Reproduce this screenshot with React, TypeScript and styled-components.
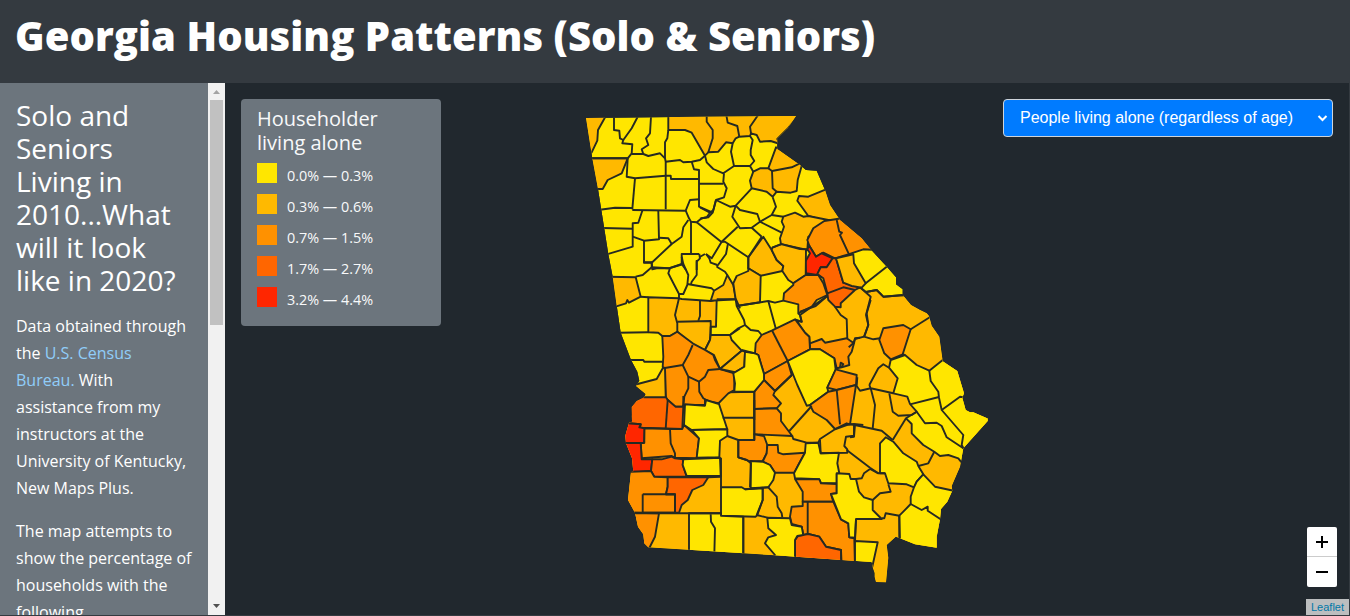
import React from "react";
import styled, { createGlobalStyle } from "styled-components";

const GlobalStyle = createGlobalStyle`
  *, *::before, *::after { box-sizing: border-box; }
  html, body, #root { height: 100%; }
  body {
    margin: 0;
    overflow: hidden;
    background: #343a40;
    color: #fff;
    font-family: "Open Sans", "Noto Sans", sans-serif;
  }
`;

const LEVELS = ["#ffe600", "#ffb900", "#ff9100", "#ff6600", "#ff2600"];
const MAP_BG = "#21282e";

const Page = styled.div`
  display: flex;
  flex-direction: column;
  height: 616px;
`;

const Header = styled.header`
  flex: 0 0 83px;
  padding: 12px 15px 0;
  background: #343a40;
`;

const Title = styled.h1`
  margin: 0;
  font-size: 40px;
  font-weight: 800;
  line-height: 48px;
  letter-spacing: 0.04px;
  white-space: nowrap;
`;

const Body = styled.div`
  display: flex;
  height: 532px;
`;

const Sidebar = styled.aside`
  width: 208px;
  padding: 16px 16px 0;
  overflow: hidden;
  background: #6c757d;
`;

const Heading = styled.h3`
  margin: 0 0 16px;
  font-size: 28px;
  font-weight: 400;
  line-height: 33px;
`;

const Paragraph = styled.p`
  margin: 0 -1px 16px 0;
  font-size: 16px;
  line-height: 27px;
`;

const Link = styled.a`
  color: #90cdf9;
  text-decoration: none;
`;

const ScrollTrack = styled.div`
  display: flex;
  flex-direction: column;
  align-items: center;
  width: 17px;
  background: #f1f1f1;
`;

const ScrollThumb = styled.div`
  width: 13px;
  height: 225px;
  margin-bottom: auto;
  background: #c1c1c1;
`;

const ScrollArrow = styled.svg`
  display: block;
  width: 17px;
  height: 17px;
`;

const MapPane = styled.main`
  position: relative;
  display: flex;
  justify-content: space-between;
  align-items: flex-start;
  width: 1124px;
  padding: 16px 16px 0;
  background: ${MAP_BG};
`;

const MapDrawing = styled.svg`
  position: absolute;
  inset: 0;
`;

const Legend = styled.section`
  position: relative;
  width: 200px;
  height: 227px;
  padding: 8px 16px;
  border-radius: 4px;
  background: #6c757d;
  color: #f8f9fa;
`;

const LegendTitle = styled.h2`
  width: 140px;
  margin: 0 0 8px;
  font-size: 20px;
  font-weight: 400;
  line-height: 24px;
`;

const LegendRow = styled.div`
  display: flex;
  gap: 10px;
  height: 31px;
  font-size: 14.4px;
  line-height: 25px;
`;

const Swatch = styled.span<{ $color: string }>`
  width: 20px;
  height: 20px;
  background: ${(p) => p.$color};
`;

const Picker = styled.button`
  position: relative;
  display: flex;
  align-items: center;
  justify-content: space-between;
  width: 330px;
  height: 38px;
  padding: 0 4px 0 16px;
  border: 1px solid #ced4da;
  border-radius: 4px;
  background: #007bff;
  color: #fff;
  font: 16px "Liberation Sans", Arial, sans-serif;
`;

const Controls = styled.div`
  position: absolute;
  right: 0;
  bottom: 0;
  display: flex;
  flex-direction: column;
  align-items: flex-end;
  gap: 12px;
`;

const ZoomBox = styled.div`
  width: 30px;
  margin-right: 12px;
  border-radius: 2px;
  overflow: hidden;
  background: #fff;
`;

const ZoomButton = styled.div`
  display: flex;
  align-items: center;
  justify-content: center;
  height: 30px;
  &:first-child {
    border-bottom: 1px solid #ccc;
  }
`;

const Attribution = styled.div`
  height: 16px;
  padding: 0 5px;
  background: #bcbebf;
  color: #0078a8;
  font: 11px/17px "Liberation Sans", Arial, sans-serif;
`;

/* Each sheet has its own origin; its points are in thirds of a pixel. */
type Sheet = { at: [number, number]; areas: [number, string][]; lines: string[] };

const outline =
  "586,118 592.3,158.3 598,189 608.3,254 612.7,276.7 616.7,305.7 620.7,332.7 631,360 637.3,371.7 639.3,380.7 636,386 645.7,394 644.3,397.3 636.7,401 631.7,407 632,421.7 629,422.7 625.3,435.7 626,443.3 632,458.3 633.3,471.7 631,472 628,500 635,512.7 638,526.7 643.3,534.3 644.3,543.3 648.3,547.3 740,553 775,555.3 841.7,560 871.7,562 872.7,567.3 874.7,573 874.7,577 876,582 886,582.3 888.3,557.7 886.7,545 895.7,536.7 900,538.3 905,540.3 915,544.3 936.7,547.7 936.7,536.7 940,519.3 941,509 947.3,501.7 952.3,490.7 951.7,486 960,466.7 963.3,448.3 987.7,421 987.7,418.5 973.3,412.3 970,412.3 965.7,410 962.3,397.7 964,393.3 957.3,371 942.7,361.3 939.3,336.7 931.7,325.7 929,316 926.7,313.3 920,310 911,305 902.7,295 902.7,289.3 896,284.3 896,277.3 887.3,267.3 870.7,249.3 861.7,238.3 840,220 830,205 825,190 816.7,170.7 806,170 800,165 777.3,149 777.3,139 787.3,129 796,116 700,116.7";

const southBelt =
  "718.3,403.3 728.3,392.3 754.3,391.7 775,391 791.7,375 787.7,361 810,349.3 809.3,336.7 805,332.7 796.7,320.7 801.7,321.7 800,315 811.7,306.7 827.3,296 860,287.3 866,292 876.7,290 883.3,296.7 903,295 940,300 1000,400 1000,600 600,600 600,420";

const sheets: Sheet[] = [
  {
    at: [580, 110],
    areas: [
      [1, "8,10 80,10 74,24 54,60 52,92 35,127 0,127"],
      [1, "20,145 143,145 125,190 83,210 68,237 40,237"],
    ],
    lines: [
      "35,145 143,145",
      "102,20 102,60 118,62 120,85 130,90 155,55 173,20",
      "130,90 127,100 157,103 155,130 143,145 140,200 165,205 257,197",
      "155,132 190,132 205,138 240,130 255,145 257,155 257,298",
      "213,20 210,70 198,85 205,105 185,118 190,132",
      "265,60 262,85 255,97 255,145",
      "257,155 300,150 310,157 335,155 360,150 375,137",
      "335,155 342,178 357,180 357,290 398,308",
      "257,197 272,197 273,207 357,207",
      "165,205 157,298",
      "60,299 105,293 157,294",
      "157,300 317,302 330,270 357,268",
      "357,221 430,221",
      "317,302 327,325 333,335 350,337 365,325 385,322 398,308 408,270",
      "187,302 175,338 158,340 158,410 80,433",
      "68,354 158,356",
      "158,380 192,392 237,388 235,302",
      "237,383 265,385 275,402 305,380 310,352 325,330",
      "192,392 192,457 217,457",
      "275,402 215,458 217,478 230,475 267,475 305,462 305,432 358,432",
      "333,335 333,430",
      "350,337 425,397",
      "358,432 360,445 350,455 350,480",
      "358,442 375,432",
      "305,462 318,480",
    ],
  },
  {
    at: [700, 110],
    areas: [
      [1, "-95,0 310,0 262,57 232,87 240,102 212,93 180,95 170,75 153,70 150,78 118,80 107,85 98,100 78,97 55,125 25,127 15,137 -25,68 -45,60 -95,60"],
      [1, "228,112 310,150 304,172 293,210 290,243 272,248 230,245 218,260 200,245 155,235 150,212 160,185 180,175 205,175"],
      [1, "297,258 325,260 378,238 430,240 430,330 380,333 325,318 292,272"],
      [1, "250,320 285,308 310,320 325,318 400,333 325,380 322,420 243,403 240,385 252,350 245,335"],
    ],
    lines: [
      "20,15 20,35 38,60 38,85 25,127",
      "78,10 83,38 112,48 118,80",
      "178,10 150,50 153,70",
      "15,137 20,157 40,177 70,190 102,168 93,125 98,100",
      "102,168 150,168 163,153 152,135 152,120 158,90 150,78",
      "150,168 160,185",
      "205,175 216,183 218,235 230,245",
      "216,183 275,172 300,160",
      "72,190 70,215 80,235 72,262 48,270 40,300 30,308 0,292",
      "48,270 90,290 107,287 155,235",
      "30,308 20,322 0,326",
      "107,287 97,320 120,355 155,353 180,335 172,312 120,300 107,287",
      "180,335 215,315 228,290 218,262",
      "215,315 250,320",
      "180,335 245,368",
      "155,353 185,380",
      "217,413 243,403",
      "113,350 65,395",
      "65,395 75,395 145,442 145,475",
      "145,442 185,380",
      "65,395 35,445 18,432",
      "84,400 78,432 50,470",
      "18,432 28,445 32,458 52,465",
    ],
  },
  {
    at: [780, 190],
    areas: [
      [2, "133,93 185,85 250,120 290,180 250,178 205,193 165,205 130,188 108,200 88,167 82,150 100,115"],
      [4, "88,167 108,200 125,190 158,205 140,232 122,232 112,255 78,250 76,215 90,190 82,178"],
      [3, "158,205 168,205 190,278 240,292 225,300 182,340 182,352 165,350 145,330 142,310 130,265 112,252 122,232 140,232"],
      [1, "168,205 220,193 222,220 257,280 245,293 215,288 190,278"],
    ],
    lines: [
      "170,90 178,125 186,128 180,135 207,193",
      "142,310 190,292 225,300",
      "320,230 257,280",
      "240,292 272,320 258,375 265,405 253,440",
      "258,306 290,300 310,320 375,315",
      "142,318 107,348 60,365",
    ],
  },
  {
    at: [600, 260],
    areas: [
      [1, "20,50 107,52 122,110 87,128 82,120 78,130 30,145"],
      [1, "145,112 237,115 245,117 332,123 350,118 348,200 332,200 330,240 315,270 290,258 278,255 232,215 210,228 187,228 175,218 145,217"],
      [1, "332,225 390,225 395,240 425,272 360,327 342,285 315,270 330,240"],
      [1, "382,45 400,75 408,118 332,122 342,92 370,75"],
      [1, "90,378 170,357 190,322 197,325 197,415 110,415"],
      [2, "187,228 210,228 232,215 278,250 315,270 340,285 345,300 360,327 403,340 403,390 385,400 355,430 330,425 315,418 315,435 253,435 248,440 225,440 198,415 195,325 188,320 190,290"],
    ],
    lines: [
      "107,50 128,45 155,22 205,25 210,24 240,15 250,12 265,45 262,75 250,102 237,102 215,60 205,40 210,25",
      "132,0 132,8 155,8 155,22",
      "250,12 245,-10",
      "237,102 237,115",
      "145,217 55,218",
      "122,110 145,112",
      "237,115 225,165 232,190 232,215",
      "232,185 332,183 332,200",
      "300,122 300,168 295,182",
      "262,72 335,85 342,92",
      "273,72 275,65 290,45 290,10 290,0",
      "382,45 375,35 350,20",
      "350,118 408,118 420,145",
      "332,200 332,225",
      "390,225 420,205",
      "190,325 248,315 265,285 278,255",
      "248,315 265,350 297,365 315,350 325,330 360,327",
      "265,350 265,385 253,410 250,438",
      "297,365 298,395 310,415 315,418",
      "85,300 130,300 133,305 187,305",
    ],
  },
  {
    at: [720, 260],
    areas: [
      [1, "130,-70 85,-8 85,25 122,47 187,33 190,18 170,0 155,-30"],
      [1, "157,-37 183,-48 240,-33 258,-32 257,45 220,70 205,60 187,33 190,18 170,0 155,-30"],
      [1, "40,70 50,48 85,33 85,25 122,47 120,127 50,138 45,105"],
      [1, "0,327 65,272 75,275 73,320 45,337"],
      [2, "257,45 295,45 310,70 322,105 290,120 275,140 235,160 235,133 190,122 192,100 220,75 220,70"],
      [2, "225,178 255,218 268,230 270,268 203,303 132,342 115,285 105,280 107,250 125,225 155,212"],
      [2, "270,250 305,237 315,248 380,235 402,250 395,275 385,290 388,315 365,322 350,325 343,295 300,268 270,268"],
      [2, "132,342 203,303 215,345 165,393 132,360"],
      [2, "103,395 132,360 165,393 160,405 183,430 170,445 103,447"],
      [0, "75,275 105,280 115,285 132,342 132,360 103,395 43,395 45,370 40,340 45,337 73,320"],
      [0, "203,303 270,268 300,268 343,295 347,330 322,383 325,395 270,435 260,437 232,375"],
      [2, "347,328 410,345 408,375 350,390 322,383"],
      [2, "325,395 350,390 408,375 390,493 380,490 345,507 320,480 280,455 270,435"],
    ],
    lines: [
      "157,213 203,303",
      "50,138 145,123 167,205",
      "145,123 165,128 190,122",
      "50,138 72,180 75,195 92,210 115,213 125,225",
      "75,195 55,205 30,225",
      "65,270 105,280",
      "235,160 240,165 245,185 225,178",
      "350,390 360,493",
      "215,345 165,393",
      "103,395 103,480",
      "345,140 362,165 380,178 382,235",
      "402,250 405,235 420,233",
      "365,322 370,312 362,308 360,322",
    ],
  },
  {
    at: [850, 300],
    areas: [
      [0, "122,180 165,165 200,195 238,212 278,180 350,190 430,355 350,450 345,500 325,475 295,465 270,468 253,455 220,435 185,400 185,372 168,355 200,335 180,312 172,290 130,280 143,235 117,203"],
      [2, "100,85 160,75 182,88 158,163 122,178 103,160 88,120"],
    ],
    lines: [
      "238,212 242,243 265,275 267,293 275,330 340,405 335,435 342,448",
      "267,291 180,313",
      "275,330 330,290 350,293",
      "200,335 225,370 260,368 275,378 290,412 340,445",
      "182,88 245,48",
      "158,163 165,165",
      "62,0 50,40 55,75 42,110 70,118 90,115",
      "42,110 15,117 10,130 -4,142",
      "58,255 85,205 100,193 117,203",
      "130,280 62,265 58,255",
      "62,265 30,272 20,258 22,232",
      "62,265 75,315 68,385",
      "118,280 128,335 145,347 185,345 200,335",
      "168,355 128,420",
      "0,372 95,392 128,420",
      "15,375 12,410 0,412",
    ],
  },
  {
    at: [620, 400],
    areas: [
      [3, "10,15 50,-20 73,-8 138,-8 143,0 167,20 190,20 187,87 60,83 62,73 10,68"],
      [0, "195,13 255,17 258,0 297,12 322,88 215,90 192,75"],
      [2, "73,85 150,87 187,87 192,75 215,95 237,115 230,175 165,173 155,168 65,175 62,130 73,128"],
      [4, "0,68 62,73 58,82 73,85 72,128 62,130 65,178 97,178 93,213 30,218 0,130"],
      [3, "97,178 125,178 155,170 165,175 190,178 188,195 200,230 103,230 93,213"],
      [0, "215,90 322,88 322,108 300,122 298,172 230,173 237,115"],
      [0, "190,178 300,173 302,228 200,228 188,195"],
      [2, "10,216 93,213 103,230 143,232 143,260 138,283 165,283 165,338 0,338"],
      [2, "30,338 117,340 105,410 85,450 30,420"],
      [3, "143,232 265,232 250,255 217,270 203,300 185,315 177,338 165,338 165,283 138,283 143,260"],
      [0, "303,262 365,262 375,268 428,265 428,300 412,345 407,350 303,347"],
      [0, "207,340 303,340 303,347 370,350 370,480 207,480"],
    ],
    lines: [
      "143,0 137,85",
      "190,20 195,13",
      "190,-12 190,20",
      "150,87 152,130 165,160 165,173",
      "0,129 72,129",
      "308,53 403,53",
      "403,0 403,120 355,120",
      "303,173 303,262",
      "322,108 355,120 355,172 380,180 393,190 390,262",
      "68,283 165,283 165,338 68,338 68,283",
      "40,340 303,340",
      "265,232 302,230",
      "272,343 273,365 285,385 283,465",
    ],
  },
  {
    at: [740, 400],
    areas: [
      [2, "43,27 110,25 123,40 123,63 157,108 43,103"],
      [2, "-5,120 43,120 43,103 72,108 82,135 80,160 68,183 32,185 20,180 -5,172"],
      [2, "82,135 113,135 115,158 130,163 195,158 178,190 163,218 105,218 90,195 68,185 80,160"],
      [0, "32,183 68,185 90,195 105,218 100,240 85,262 32,265"],
      [0, "197,130 235,128 242,160 297,158 292,190 298,220 290,222 290,250 243,250 238,238 165,235 162,220 178,190 195,158"],
      [2, "165,237 238,238 243,250 290,252 290,280 273,282 280,305 188,305 188,275"],
      [2, "155,320 188,318 188,305 280,305 303,358 325,370 328,412 343,415 345,500 305,500 303,450 258,440 238,410 205,402 190,405 185,380 155,372 150,350"],
      [3, "165,500 165,420 175,407 205,402 238,410 258,440 303,450 303,500"],
      [0, "82,353 150,355 155,375 185,380 190,405 172,408 165,420 165,500 105,500 105,465 75,430 85,412 108,405 85,385"],
      [0, "290,220 328,222 332,237 348,237 357,275 372,292 398,300 398,330 425,357 348,357 345,413 328,412 325,370 303,358 273,282 290,280"],
    ],
    lines: [
      "148,93 215,18",
      "157,108 160,117 200,128 235,128 240,117 285,88 320,75 342,72 370,75",
      "342,72 342,107 318,110 313,138 322,148 322,158 242,160 240,120",
      "203,305 203,402",
      "50,345 82,353",
      "68,263 68,300 50,345",
      "85,262 68,263",
      "85,262 110,290 113,320 125,340 127,352",
      "68,263 15,268",
      "10,352 10,470",
    ],
  },
  {
    at: [840, 430],
    areas: [
      [0, "120,40 137,22 160,35 190,70 230,95 235,108 250,133 230,155 222,172 200,163 145,160 135,130 120,130"],
      [0, "250,133 285,170 355,185 310,300 300,380 180,340 178,257 190,245 212,222 212,200 222,172 230,155"],
      [0, "45,333 113,337 97,410 45,410"],
    ],
    lines: [
      "212,222 245,240 263,230 263,242 305,270",
      "235,108 265,100 283,65",
      "20,60 90,113 115,130",
      "90,117 115,130 135,130",
      "90,117 72,130 65,145 48,147",
      "145,163 152,185 120,190 98,210",
      "125,265 133,265 137,250 178,257",
      "178,257 178,325",
      "48,267 45,333",
    ],
  },
];

const place = (at: [number, number], points: string) =>
  points
    .split(" ")
    .map((pair) => {
      const [x, y] = pair.split(",").map(Number);
      return `${(at[0] + x / 3).toFixed(1)},${(at[1] + y / 3).toFixed(1)}`;
    })
    .join(" ");

const GeorgiaMap = () => (
  <MapDrawing width="1124" height="532" viewBox="225 83 1124 532">
    <clipPath id="state">
      <polygon points={outline} />
    </clipPath>
    <g clipPath="url(#state)" stroke="#262a22" strokeWidth="1.9" strokeLinejoin="round">
      <polygon points={outline} fill={LEVELS[0]} stroke="none" />
      <polygon points={southBelt} fill={LEVELS[1]} />
      {sheets.map((sheet) =>
        sheet.areas.map(([level, points]) => (
          <polygon key={points} points={place(sheet.at, points)} fill={LEVELS[level]} />
        ))
      )}
      {sheets.map((sheet) =>
        sheet.lines.map((points) => (
          <polyline key={points} points={place(sheet.at, points)} fill="none" />
        ))
      )}
    </g>
  </MapDrawing>
);

const ranges = ["0.0% — 0.3%", "0.3% — 0.6%", "0.7% — 1.5%", "1.7% — 2.7%", "3.2% — 4.4%"];

export default function App() {
  return (
    <Page>
      <GlobalStyle />
      <Header>
        <Title>Georgia Housing Patterns (Solo &amp; Seniors)</Title>
      </Header>
      <Body>
        <Sidebar>
          <Heading>
            Solo and Seniors Living in 2010...What will it look like in 2020?
          </Heading>
          <Paragraph>
            Data obtained through the <Link>U.S. Census Bureau.</Link> With assistance from my
            instructors at the University of Kentucky, New Maps Plus.
          </Paragraph>
          <Paragraph>
            The map attempts to show the percentage of households with the following
          </Paragraph>
        </Sidebar>
        <ScrollTrack>
          <ScrollArrow viewBox="0 0 17 17">
            <path d="M5 11h7L8.5 7z" fill="#a3a3a3" />
          </ScrollArrow>
          <ScrollThumb />
          <ScrollArrow viewBox="0 0 17 17">
            <path d="M5 6h7L8.5 10z" fill="#505050" />
          </ScrollArrow>
        </ScrollTrack>
        <MapPane>
          <GeorgiaMap />
          <Legend>
            <LegendTitle>Householder living alone</LegendTitle>
            {ranges.map((range, i) => (
              <LegendRow key={range}>
                <Swatch $color={LEVELS[i]} />
                {range}
              </LegendRow>
            ))}
          </Legend>
          <Picker>
            People living alone (regardless of age)
            <svg width="11" height="8" viewBox="0 0 11 8" fill="none" stroke="#fff" strokeWidth="2">
              <path d="M1.5 2l4 4 4-4" />
            </svg>
          </Picker>
          <Controls>
            <ZoomBox>
              <ZoomButton>
                <svg width="12" height="12" stroke="#000" strokeWidth="2">
                  <path d="M0 6h12M6 0v12" />
                </svg>
              </ZoomButton>
              <ZoomButton>
                <svg width="12" height="12" stroke="#000" strokeWidth="2">
                  <path d="M0 6h12" />
                </svg>
              </ZoomButton>
            </ZoomBox>
            <Attribution>Leaflet</Attribution>
          </Controls>
        </MapPane>
      </Body>
    </Page>
  );
}
